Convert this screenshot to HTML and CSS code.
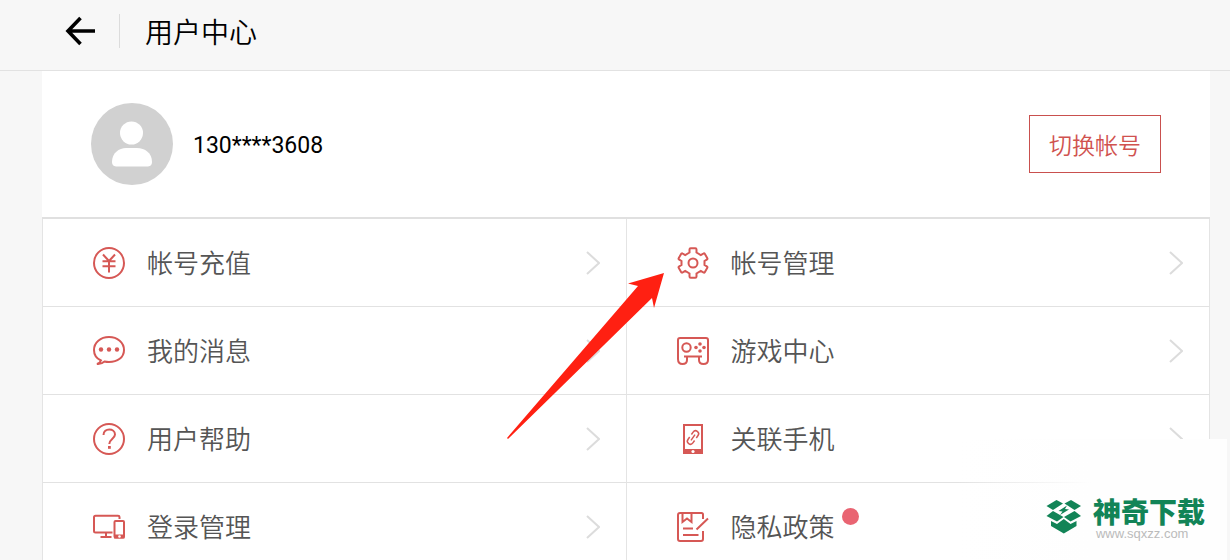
FILE: index.html
```html
<!DOCTYPE html>
<html lang="zh-CN">
<head>
    <meta charset="UTF-8">
    <meta name="viewport" content="width=device-width, initial-scale=1.0">
    <title>用户中心</title>
    <link rel="stylesheet" href="styles.css">
</head>
<body>
    <header class="header">
        <button class="back" type="button" aria-label="返回">
            <svg width="30" height="30" viewBox="0 0 30 30"><path d="M15.500 2 L3 15 L15.500 28 M3 15 H30" stroke="#000" stroke-width="3.600" fill="none"/></svg>
        </button>
        <h1 class="title">用户中心</h1>
    </header>

    <main class="panel">
        <section class="profile">
            <svg class="avatar" width="82" height="82" viewBox="0 0 82 82">
                <circle cx="41" cy="41" r="41" fill="#d1d1d1"/>
                <circle cx="40.500" cy="30" r="11.500" fill="#fff"/>
                <path d="M21 59 C21 50 28 45 35 45 H46 C54 45 61 50 61 59 Q61 63 57 63.500 H25 Q21 63 21 59Z" fill="#fff"/>
            </svg>
            <span class="phone">130****3608</span>
            <button class="switch" type="button">切换帐号</button>
        </section>

        <nav class="menu">
            <a class="item" href="#recharge">
                <svg class="icon" viewBox="0 0 32 32"><circle cx="16" cy="16" r="15"/><path d="M10 7.500 L16 14 L22 7.500 M9.500 14.200 H22.500 M9.500 19.200 H22.500 M16 14 V25.500"/></svg>
                <span class="label">帐号充值</span>
                <svg class="chevron" viewBox="0 0 14 24"><path d="M1 1 L13 12 L1 23"/></svg>
            </a>
            <a class="item" href="#manage">
                <svg class="icon" viewBox="0 0 32 32"><path d="M12.500 5.500 V2.500 Q12.500 1.300 13.700 1.300 H18.300 Q19.500 1.300 19.500 2.500 V5.500 L23.800 8 L26.300 6.600 Q27.300 6 27.900 7 L30.200 11 Q30.800 12 29.800 12.600 L27.500 14 V18 L29.800 19.400 Q30.800 20 30.200 21 L27.900 25 Q27.300 26 26.300 25.400 L23.800 24 L19.500 26.500 V29.500 Q19.500 30.700 18.300 30.700 H13.700 Q12.500 30.700 12.500 29.500 V26.500 L8.200 24 L5.700 25.400 Q4.700 26 4.100 25 L1.800 21 Q1.200 20 2.200 19.400 L4.500 18 V14 L2.200 12.600 Q1.200 12 1.800 11 L4.100 7 Q4.700 6 5.700 6.600 L8.200 8Z"/><circle cx="16" cy="16" r="4.500"/></svg>
                <span class="label">帐号管理</span>
                <svg class="chevron" viewBox="0 0 14 24"><path d="M1 1 L13 12 L1 23"/></svg>
            </a>
            <a class="item" href="#messages">
                <svg class="icon" viewBox="0 0 32 32"><path d="M8 25.500 C3.500 23.500 1 19.500 1 15 C1 7.500 7.500 2 16 2 S31 7.500 31 15 S24.500 27 16 27 Q13.500 27 11.500 26.500 Q8 29.500 4 29 Q7 28 8 25.500Z"/><g class="solid"><circle cx="8" cy="14.500" r="2.200"/><circle cx="16" cy="14.500" r="2.200"/><circle cx="24" cy="14.500" r="2.200"/></g></svg>
                <span class="label">我的消息</span>
                <svg class="chevron" viewBox="0 0 14 24"><path d="M1 1 L13 12 L1 23"/></svg>
            </a>
            <a class="item" href="#games">
                <svg class="icon" viewBox="0 0 32 32"><path d="M3 3 H29 Q31 3 31 5 V25 Q31 29 26.500 29 Q22 29 22 25 V22 M1 24 V5 Q1 3 3 3 M1 24 Q1 29 5.500 29 Q10 29 10 25 V22 M7 21.500 H25"/><circle cx="9.500" cy="12.500" r="4.200"/><g class="solid"><circle cx="23" cy="9" r="1.800"/><circle cx="19" cy="12.500" r="1.800"/><circle cx="27" cy="12.500" r="1.800"/><circle cx="23" cy="16" r="1.800"/></g></svg>
                <span class="label">游戏中心</span>
                <svg class="chevron" viewBox="0 0 14 24"><path d="M1 1 L13 12 L1 23"/></svg>
            </a>
            <a class="item" href="#help">
                <svg class="icon" viewBox="0 0 32 32"><circle cx="16" cy="16" r="15"/><path d="M10.500 12 C10.500 4.500 22 5 22 11.500 C22 15.500 16.300 16 16.300 21"/><rect class="solid" x="15" y="23" width="2.800" height="2.800"/></svg>
                <span class="label">用户帮助</span>
                <svg class="chevron" viewBox="0 0 14 24"><path d="M1 1 L13 12 L1 23"/></svg>
            </a>
            <a class="item" href="#phone">
                <svg class="icon" viewBox="0 0 32 32"><path d="M7 2 H25 V30 H7Z"/><path class="solid" d="M6 26 H26 V31 H6Z"/><circle cx="16" cy="28.500" r="1.600" fill="#fff" stroke="none"/><g transform="rotate(35 16 14.500)"><path d="M13 13 V10 Q13 7 16 7 T19 10 V13 M13 16 V19 Q13 22 16 22 T19 19 V16 M16 11 V18" stroke-width="1.500"/></g></svg>
                <span class="label">关联手机</span>
                <svg class="chevron" viewBox="0 0 14 24"><path d="M1 1 L13 12 L1 23"/></svg>
            </a>
            <a class="item" href="#login">
                <svg class="icon" viewBox="0 0 32 32"><path d="M26.500 8 V6 Q26.500 4.800 25 4.800 H2.500 Q1 4.800 1 6.300 V20 Q1 21.500 2.500 21.500 H19.500 M13 21.500 V25.500 M7.500 26 H18.500"/><rect x="21.500" y="10" width="9.500" height="16.500" rx="1"/><path class="solid" d="M21 23.500 H31.500 V27.500 H21Z"/><circle cx="26.500" cy="25.500" r="1.300" fill="#fff" stroke="none"/></svg>
                <span class="label">登录管理</span>
                <svg class="chevron" viewBox="0 0 14 24"><path d="M1 1 L13 12 L1 23"/></svg>
            </a>
            <a class="item" href="#privacy">
                <svg class="icon" viewBox="0 0 32 32"><path d="M26 8 V3.500 Q26 2 24.500 2 H3 Q1 2 1 4 V28 Q1 30 3 30 H24 Q26 30 26 28 V20 M5.500 2 V11 L10 7.500 L14.500 11 V2 M6 17.500 H16 M6 24 H21.500 M19.500 18.500 L31 7.500"/></svg>
                <span class="label">隐私政策<i class="dot"></i></span>
                <svg class="chevron" viewBox="0 0 14 24"><path d="M1 1 L13 12 L1 23"/></svg>
            </a>
        </nav>

        <svg class="pointer" width="158" height="168" viewBox="0 0 158 168"><path d="M0 166 L131 14 L121 11.500 L157 1 L147 36 L145 26 L1 167Z" fill="#ff2012"/></svg>
    </main>

    <aside class="watermark">
        <svg width="36" height="34" viewBox="0 0 36 34" fill="#128457">
            <path d="M10.500 0 L17 3.500 L7 10 L0.500 6Z"/>
            <path d="M25 0 L18.500 3.500 L28.500 10 L35 6Z"/>
            <path d="M7 11 L17.500 17 L11 21.500 L0.500 16Z"/>
            <path d="M28.500 11 L18 17 L24.500 21.500 L35 16Z"/>
            <path d="M5 21 L11 24 L17.800 19 L24.500 24 L30.500 21 V26 L17.800 33.500 L5 26Z"/>
            <path d="M21 5.500 L12.500 11 L16.500 11.500 L14 15 L23 9.500 L19 9Z"/>
        </svg>
        <div class="brand">
            <strong class="brand-name">神奇下载</strong>
            <span class="brand-url">www.sqxzz.com</span>
        </div>
    </aside>
</body>
</html>
```
FILE: styles.css
```css
* {
    box-sizing: border-box;
}

body {
    position: relative;
    height: 100vh;
    margin: 0;
    overflow: hidden;
    background-color: #f7f7f7;
    font-family: Roboto, "Noto Sans CJK SC", sans-serif;
    font-weight: 350;
}

button {
    font-family: inherit;
    font-weight: inherit;
    cursor: pointer;
}

svg {
    display: block;
    flex: none;
}

.header {
    display: flex;
    align-items: center;
    height: 71px;
    padding: 0 65px 8px;
    border-bottom: 1px solid #e2e2e2;
}

.back {
    height: 34px;
    padding: 0 24px 0 0;
    border: 0;
    border-right: 1px solid #dcdcdc;
    background: none;
}

.title {
    margin: 0;
    padding: 6px 0 0 25px;
    font-size: 28px;
    font-weight: 350;
    line-height: 40px;
    color: #000;
}

.panel {
    position: relative;
    margin: 0 20px 0 42px;
    background-color: #fff;
}

.profile {
    display: flex;
    align-items: center;
    height: 148px;
    padding: 0 49px;
    border-bottom: 2px solid #e0e0e0;
}

.phone {
    margin-left: 20px;
    padding-top: 3px;
    font-size: 23px;
    font-weight: 400;
    color: #000;
}

.switch {
    height: 58px;
    margin-left: auto;
    padding: 0 19px;
    border: 1px solid #c9504e;
    background-color: #fff;
    font-size: 23px;
    color: #d0524f;
}

.menu {
    display: grid;
    grid-template-columns: 1fr 1fr;
    border-left: 1px solid #e4e4e4;
}

.item {
    display: flex;
    align-items: center;
    height: 88px;
    padding: 0 26px 0 50px;
    border-right: 1px solid #e4e4e4;
    border-bottom: 1px solid #e2e2e2;
    color: #555;
    text-decoration: none;
}

.icon {
    width: 32px;
    height: 32px;
    fill: none;
    stroke: #d65855;
    stroke-width: 2;
}

.solid {
    fill: #d65855;
    stroke: none;
}

.label {
    position: relative;
    margin-left: 22px;
    padding-top: 2px;
    font-size: 26px;
    line-height: 38px;
}

.dot {
    position: absolute;
    top: 1px;
    left: 100%;
    width: 17px;
    height: 17px;
    margin-left: 7px;
    border-radius: 50%;
    background-color: #e96472;
}

.chevron {
    width: 14px;
    height: 24px;
    margin-left: auto;
    fill: none;
    stroke: #dcdcdc;
    stroke-width: 2;
}

/* red arrow pointing at 帐号管理 */
.pointer {
    position: absolute;
    top: 201px;
    right: 545px;
}

.watermark {
    position: absolute;
    right: 3px;
    bottom: 0;
    display: flex;
    align-items: flex-start;
    justify-content: flex-end;
    width: 270px;
    height: 121px;
    padding: 61px 22px 0 0;
    background: linear-gradient(to right, transparent, #fefefe 50%);
}

.brand {
    display: flex;
    flex-direction: column;
    margin-left: 11px;
}

.brand-name {
    font-size: 28px;
    font-weight: 900;
    line-height: 28px;
    color: #128457;
}

.brand-url {
    padding-left: 3px;
    font-family: "Liberation Sans", sans-serif;
    font-size: 13px;
    font-weight: 400;
    line-height: 12px;
    color: #bbb;
}
```
